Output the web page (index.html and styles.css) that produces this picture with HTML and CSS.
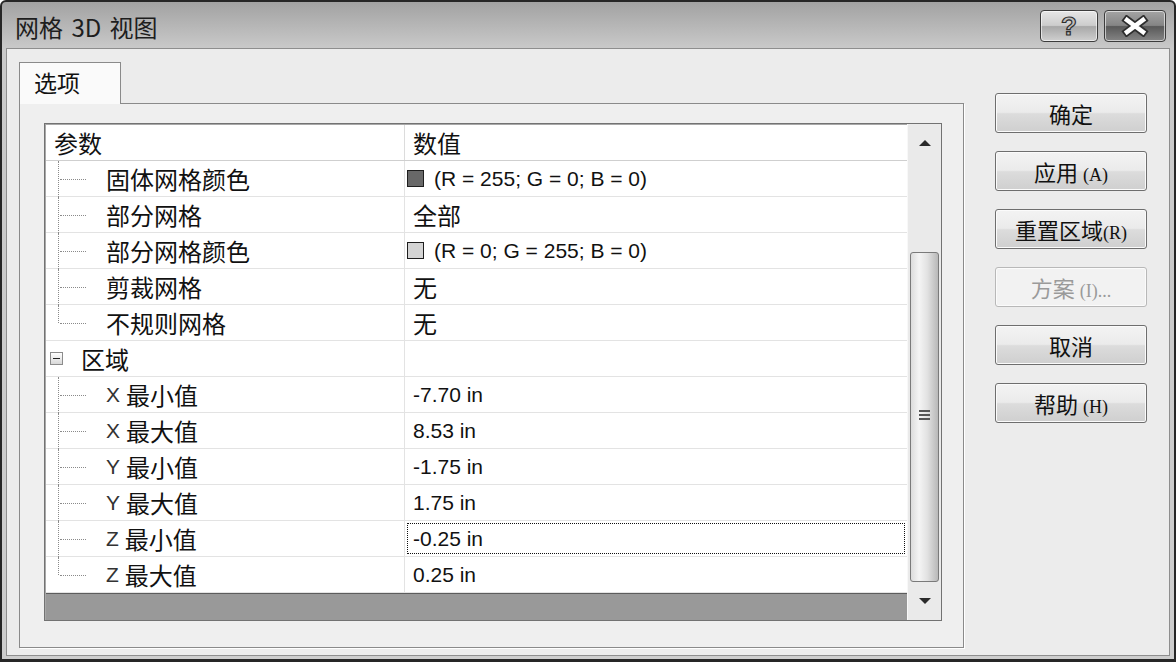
FILE: index.html
```html
<!DOCTYPE html>
<html lang="zh-CN">
<head>
  <meta charset="UTF-8">
  <title>网格 3D 视图</title>
  <link rel="stylesheet" href="styles.css">
</head>
<body>
  <div class="window">
    <div class="titlebar">
      <span class="title">网格 3D 视图</span>
      <div class="caption-btns">
        <span class="cap-btn help">?</span>
        <span class="cap-btn close">
          <svg width="34" height="22" viewBox="0 0 34 22">
            <path d="M9 5 L25 17 M25 5 L9 17" stroke="#2e2e2e" stroke-width="8" stroke-linecap="square"/>
            <path d="M9 5 L25 17 M25 5 L9 17" stroke="#fff" stroke-width="4.5" stroke-linecap="square"/>
          </svg>
        </span>
      </div>
    </div>

    <div class="client">
      <div class="tabs">
        <div class="tab">选项</div>
        <div class="tab-panel">
          <div class="grid">
            <div class="grid-main">
              <div class="row head">
                <div class="cell name">参数</div>
                <div class="cell val">数值</div>
              </div>
              <div class="row tree">
                <div class="cell name">固体网格颜色</div>
                <div class="cell val num"><span class="swatch dark"></span>(R = 255; G = 0; B = 0)</div>
              </div>
              <div class="row tree">
                <div class="cell name">部分网格</div>
                <div class="cell val">全部</div>
              </div>
              <div class="row tree">
                <div class="cell name">部分网格颜色</div>
                <div class="cell val num"><span class="swatch light"></span>(R = 0; G = 255; B = 0)</div>
              </div>
              <div class="row tree">
                <div class="cell name">剪裁网格</div>
                <div class="cell val">无</div>
              </div>
              <div class="row tree last">
                <div class="cell name">不规则网格</div>
                <div class="cell val">无</div>
              </div>
              <div class="row group">
                <div class="cell name"><span class="expander"></span>区域</div>
                <div class="cell val"></div>
              </div>
              <div class="row tree">
                <div class="cell name"><span class="axis">X</span>最小值</div>
                <div class="cell val num">-7.70 in</div>
              </div>
              <div class="row tree">
                <div class="cell name"><span class="axis">X</span>最大值</div>
                <div class="cell val num">8.53 in</div>
              </div>
              <div class="row tree">
                <div class="cell name"><span class="axis">Y</span>最小值</div>
                <div class="cell val num">-1.75 in</div>
              </div>
              <div class="row tree">
                <div class="cell name"><span class="axis">Y</span>最大值</div>
                <div class="cell val num">1.75 in</div>
              </div>
              <div class="row tree">
                <div class="cell name"><span class="axis">Z</span>最小值</div>
                <div class="cell val num focus">-0.25 in</div>
              </div>
              <div class="row tree last">
                <div class="cell name"><span class="axis">Z</span>最大值</div>
                <div class="cell val num">0.25 in</div>
              </div>
              <div class="hband"></div>
            </div>
            <div class="vscroll">
              <div class="arrow up"></div>
              <div class="track">
                <div class="thumb"><span class="grip"></span></div>
              </div>
              <div class="arrow down"></div>
            </div>
          </div>
        </div>
      </div>

      <div class="buttons">
        <div class="btn"><span>确定</span></div>
        <div class="btn"><span>应用 <small>(A)</small></span></div>
        <div class="btn"><span>重置区域<small>(R)</small></span></div>
        <div class="btn disabled"><span>方案 <small>(I)...</small></span></div>
        <div class="btn"><span>取消</span></div>
        <div class="btn"><span>帮助 <small>(H)</small></span></div>
      </div>
    </div>
  </div>
</body>
</html>
```

FILE: styles.css
```css
body {
  margin: 0;
  background: #fff;
  font-family: "Noto Sans CJK SC", "Liberation Sans", sans-serif;
  color: #111;
}

.window {
  width: 1176px;
  height: 662px;
  box-sizing: border-box;
  border: 2px solid #262626;
  border-bottom-width: 3px;
  border-radius: 6px 6px 0 0;
  background: linear-gradient(#a2a2a2, #c9c9c9 46px, #cdcdcd);
  padding: 0 4px 3px 4px;
  display: flex;
  flex-direction: column;
}

/* title bar */
.titlebar {
  height: 46px;
  display: flex;
  align-items: center;
  justify-content: space-between;
  padding-left: 9px;
}

.title {
  font-size: 24px;
  color: #1e1e1e;
  word-spacing: 3px;
  margin-top: 2px;
}

.caption-btns {
  display: flex;
  gap: 6px;
  margin-top: 8px;
  align-self: flex-start;
  margin-right: 4px;
}

.cap-btn {
  height: 32px;
  box-sizing: border-box;
  border: 1px solid #3c3c3c;
  border-radius: 4px;
  display: flex;
  align-items: center;
  justify-content: center;
  box-shadow: inset 0 0 0 1px rgba(255,255,255,0.6);
}

.cap-btn.help {
  width: 58px;
  background: linear-gradient(#e6e6e6, #cdcdcd 48%, #a8a8a8 52%, #cfcfcf);
  font-family: "Liberation Sans", sans-serif;
  font-weight: bold;
  font-size: 26px;
  color: #bdbdbd;
  -webkit-text-stroke: 1.2px #2e2e2e;
}

.cap-btn.close {
  width: 62px;
  background: linear-gradient(#a4a4a4, #858585 48%, #595959 52%, #858585);
}

/* client area */
.client {
  flex: 1;
  background: #ececec;
  border: 1px solid #8e8e8e;
  display: flex;
  padding: 13px 0 0 12px;
}

.tabs {
  width: 945px;
  display: flex;
  flex-direction: column;
}

.tab {
  width: 102px;
  height: 42px;
  box-sizing: border-box;
  border: 1px solid #8a8a8a;
  border-bottom: none;
  background: #fafafa;
  margin-bottom: -1px;
  position: relative;
  z-index: 1;
  font-size: 23px;
  padding: 2px 0 0 14px;
}

.tab-panel {
  height: 545px;
  box-sizing: border-box;
  border: 1px solid #8a8a8a;
  box-shadow: 1px 1px 0 #fff;
  background: #efefef;
  padding: 19px 21px 0 24px;
}

/* property grid */
.grid {
  height: 498px;
  box-sizing: border-box;
  border: 1px solid #727272;
  box-shadow: inset 1px 1px 0 #a8a8a8;
  display: flex;
  background: #fff;
}

.grid-main {
  flex: 1;
  display: flex;
  flex-direction: column;
  padding: 1px 0 0 1px;
}

.row {
  display: flex;
  height: 36px;
  box-sizing: border-box;
  border-bottom: 1px solid #e3e3e3;
}

.row.head {
  border-bottom: 1px solid #cfcfcf;
}

.cell {
  display: flex;
  align-items: center;
  font-size: 24px;
  white-space: nowrap;
  position: relative;
}

.cell.name {
  width: 359px;
  box-sizing: border-box;
  border-right: 1px solid #e3e3e3;
  padding-left: 8px;
}

.cell.val {
  flex: 1;
  padding-left: 8px;
}

.row.head .cell.name {
  border-right-color: #dcdcdc;
}

.num {
  font-family: "Liberation Sans", sans-serif;
  font-size: 21px;
}

.tree .cell.name {
  padding-left: 60px;
}

/* dotted tree lines */
.tree .cell.name::before {
  content: "";
  position: absolute;
  left: 12px;
  top: 0;
  bottom: -1px;
  border-left: 1px dotted #8a8a8a;
}

.tree.last .cell.name::before {
  bottom: 50%;
}

.tree .cell.name::after {
  content: "";
  position: absolute;
  left: 14px;
  top: 50%;
  width: 26px;
  border-top: 1px dotted #8a8a8a;
}

.group .cell.name {
  padding-left: 4px;
}

.expander {
  width: 13px;
  height: 13px;
  box-sizing: border-box;
  border: 1px solid #8c8c8c;
  background: linear-gradient(#fff, #d8d8d8);
  margin-right: 18px;
  position: relative;
}

.expander::after {
  content: "";
  position: absolute;
  left: 2px;
  right: 2px;
  top: 5px;
  border-top: 1px solid #222;
}

.axis {
  font-family: "Liberation Sans", sans-serif;
  font-size: 21px;
  color: #333;
  margin-right: 6px;
}

.swatch {
  width: 17px;
  height: 17px;
  box-sizing: border-box;
  border: 1px solid #1e1e1e;
  margin: 0 10px 0 -6px;
}

.swatch.dark {
  background: #686868;
}

.swatch.light {
  background: #d4d4d4;
}

.focus {
  outline: 1px dotted #111;
  outline-offset: -3px;
}

.hband {
  flex: 1;
  background: #999;
  border-top: 1px solid #5c5c5c;
}

/* vertical scrollbar */
.vscroll {
  width: 33px;
  background: #eaeaea;
  border-left: 1px solid #f8f8f8;
  display: flex;
  flex-direction: column;
  align-items: center;
}

.arrow {
  height: 38px;
  width: 100%;
  display: flex;
  align-items: center;
  justify-content: center;
}

.arrow::before {
  content: "";
  border-left: 6px solid transparent;
  border-right: 6px solid transparent;
}

.arrow.up::before {
  border-bottom: 6px solid #2a2a2a;
}

.arrow.down::before {
  border-top: 6px solid #2a2a2a;
}

.track {
  flex: 1;
  width: 100%;
  display: flex;
  justify-content: center;
}

.thumb {
  width: 29px;
  height: 330px;
  margin-top: 90px;
  box-sizing: border-box;
  border: 1px solid #7a7a7a;
  border-radius: 3px;
  background: linear-gradient(90deg, #dcdcdc, #f4f4f4 30%, #e2e2e2 60%, #b8b8b8);
  display: flex;
  align-items: center;
  justify-content: center;
}

.grip {
  width: 11px;
  height: 11px;
  background: repeating-linear-gradient(#555 0 2px, transparent 2px 4px);
  margin-bottom: 4px;
}

/* dialog buttons */
.buttons {
  margin: 31px 0 0 31px;
  display: flex;
  flex-direction: column;
  gap: 18px;
}

.btn {
  width: 152px;
  height: 40px;
  box-sizing: border-box;
  border: 1px solid #6e6e6e;
  border-radius: 3px;
  background: linear-gradient(#f3f3f3, #ebebeb 48%, #dcdcdc 52%, #cfcfcf);
  box-shadow: inset 0 0 0 1px #fbfbfb;
  display: flex;
  align-items: center;
  justify-content: center;
  font-size: 22px;
  color: #111;
}

.btn small {
  font-family: "Liberation Serif", serif;
  font-size: 18px;
}

.btn.disabled {
  color: #9a9a9a;
  border-color: #b8b8b8;
  background: #f2f2f2;
}
```
